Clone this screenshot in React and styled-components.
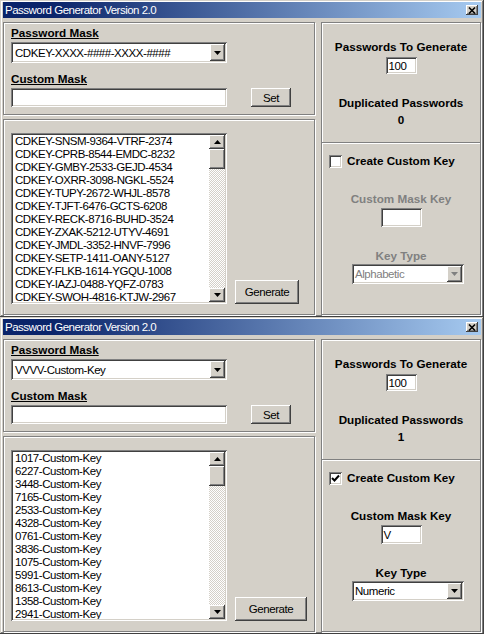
import React from "react";
import styled, { createGlobalStyle, css } from "styled-components";

const GlobalStyle = createGlobalStyle`
  body {
    margin: 0;
    background: #d4d0c8;
    font-family: "Liberation Sans", Arial, sans-serif;
  }
`;

const sunken = css`
  box-shadow: inset 1px 1px #808080, inset -1px -1px #fff,
    inset 2px 2px #404040, inset -2px -2px #d4d0c8;
`;

const raised = css`
  box-shadow: inset -1px -1px #404040, inset 1px 1px #fff,
    inset -2px -2px #808080, inset 2px 2px #d4d0c8;
`;

const smallText = css`
  font-size: 11.5px;
  letter-spacing: -0.45px;
`;

const windows = [
  {
    mask: "CDKEY-XXXX-####-XXXX-####",
    duplicated: 0,
    custom: false,
    maskKey: "",
    keyType: "Alphabetic",
    generateWidth: 64,
    items: [
      "CDKEY-SNSM-9364-VTRF-2374",
      "CDKEY-CPRB-8544-EMDC-8232",
      "CDKEY-GMBY-2533-GEJD-4534",
      "CDKEY-OXRR-3098-NGKL-5524",
      "CDKEY-TUPY-2672-WHJL-8578",
      "CDKEY-TJFT-6476-GCTS-6208",
      "CDKEY-RECK-8716-BUHD-3524",
      "CDKEY-ZXAK-5212-UTYV-4691",
      "CDKEY-JMDL-3352-HNVF-7996",
      "CDKEY-SETP-1411-OANY-5127",
      "CDKEY-FLKB-1614-YGQU-1008",
      "CDKEY-IAZJ-0488-YQFZ-0783",
      "CDKEY-SWOH-4816-KTJW-2967",
    ],
  },
  {
    mask: "VVVV-Custom-Key",
    duplicated: 1,
    custom: true,
    maskKey: "V",
    keyType: "Numeric",
    generateWidth: 72,
    items: [
      "1017", "6227", "3448", "7165", "2533", "4328", "0761",
      "3836", "1075", "5991", "8613", "1358", "2941",
    ].map((n) => n + "-Custom-Key"),
  },
];

const Arrow = ({ up, disabled }) => (
  <svg width="7" height="4" viewBox="0 0 7 4">
    <polygon
      points={up ? "3.5,0 7,4 0,4" : "0,0 7,0 3.5,4"}
      fill={disabled ? "#808080" : "#000"}
    />
  </svg>
);

const Check = () => (
  <svg width="9" height="9" viewBox="0 0 9 9">
    <polyline points="1,4 3.5,6.5 8,1.5" fill="none" stroke="#000" strokeWidth="2" />
  </svg>
);

const CloseIcon = () => (
  <svg width="8" height="7" viewBox="0 0 8 7">
    <path d="M1 0.5 L7 6.5 M7 0.5 L1 6.5" stroke="#000" strokeWidth="1.6" />
  </svg>
);

const GeneratorWindow = ({ data }) => (
  <Window>
    <TitleBar>
      <span>Password Generator Version 2.0</span>
      <CloseButton>
        <CloseIcon />
      </CloseButton>
    </TitleBar>
    <Body>
      <LeftColumn>
        <MaskPanel>
          <Label>Password Mask</Label>
          <Combo>
            <span>{data.mask}</span>
            <ArrowButton>
              <Arrow />
            </ArrowButton>
          </Combo>
          <Label $gap={9}>Custom Mask</Label>
          <Row>
            <TextField $width={216} />
            <Button $width={40} $height={19}>
              Set
            </Button>
          </Row>
        </MaskPanel>
        <ListPanel>
          <ListBox>
            <Items>
              {data.items.map((item) => (
                <Item key={item}>{item}</Item>
              ))}
            </Items>
            <ScrollBar>
              <ScrollButton>
                <Arrow up />
              </ScrollButton>
              <Thumb />
              <Track />
              <ScrollButton>
                <Arrow />
              </ScrollButton>
            </ScrollBar>
          </ListBox>
          <Button $width={data.generateWidth} $height={24}>
            Generate
          </Button>
        </ListPanel>
      </LeftColumn>
      <RightPanel>
        <CountSection>
          <Label $plain>Passwords To Generate</Label>
          <TextField $width={31} $height={17} $gap={3}>
            100
          </TextField>
          <Label $plain $gap={22}>
            Duplicated Passwords
          </Label>
          <Label $plain $gap={3}>
            {data.duplicated}
          </Label>
        </CountSection>
        <CustomSection>
          <CheckRow>
            <CheckBox>{data.custom && <Check />}</CheckBox>
            <Label $plain>Create Custom Key</Label>
          </CheckRow>
          <Centered>
            <Label $plain $disabled={!data.custom} $gap={24}>
              Custom Mask Key
            </Label>
            <TextField $width={41} $gap={2}>
              {data.maskKey}
            </TextField>
            <Label $plain $disabled={!data.custom} $gap={22}>
              Key Type
            </Label>
            <Select $disabled={!data.custom}>
              <span>{data.keyType}</span>
              <ArrowButton>
                <Arrow disabled={!data.custom} />
              </ArrowButton>
            </Select>
          </Centered>
        </CustomSection>
      </RightPanel>
    </Body>
  </Window>
);

const App = () => (
  <>
    <GlobalStyle />
    <Page>
      {windows.map((w, i) => (
        <GeneratorWindow key={i} data={w} />
      ))}
    </Page>
  </>
);

const Page = styled.div`
  display: flex;
  flex-direction: column;
  width: 484px;
`;

const Window = styled.div`
  width: 484px;
  height: 317px;
  box-sizing: border-box;
  padding: 2px 3px;
  background: #d4d0c8;
  box-shadow: inset -1px -1px #404040, inset 1px 1px #d4d0c8,
    inset -2px -2px #808080, inset 2px 2px #fff;
  display: flex;
  flex-direction: column;
`;

const TitleBar = styled.div`
  height: 16px;
  padding: 0 3px 0 2px;
  display: flex;
  align-items: center;
  justify-content: space-between;
  background: linear-gradient(to right, #0a246a 10%, #a6caf0);
  color: #fff;
  font-size: 11.5px;
  letter-spacing: -0.5px;
  margin-bottom: 4px;
`;

const CloseButton = styled.div`
  width: 12px;
  height: 10px;
  background: #d4d0c8;
  ${raised};
  display: flex;
  align-items: center;
  justify-content: center;
`;

const Body = styled.div`
  display: flex;
  gap: 6px;
  height: 293px;
`;

const LeftColumn = styled.div`
  width: 312px;
  display: flex;
  flex-direction: column;
  gap: 4px;
`;

const Panel = styled.div`
  box-sizing: border-box;
  border: 1px solid #808080;
  box-shadow: inset 1px 1px #fff, 1px 1px #fff;
`;

const MaskPanel = styled(Panel)`
  height: 93px;
  padding: 3px 7px 0;
  display: flex;
  flex-direction: column;
`;

const ListPanel = styled(Panel)`
  height: 196px;
  padding: 13px 7px 10px;
  display: flex;
  align-items: flex-end;
  gap: 8px;
`;

const RightPanel = styled(Panel)`
  width: 160px;
  display: flex;
  flex-direction: column;
`;

const Label = styled.div`
  font-size: 11.7px;
  font-weight: bold;
  line-height: 14px;
  height: 14px;
  white-space: nowrap;
  color: ${(p) => (p.$disabled ? "#808080" : "#000")};
  text-decoration: ${(p) => (p.$plain ? "none" : "underline")};
  margin-top: ${(p) => p.$gap || 0}px;
`;

const Combo = styled.div`
  margin-top: 2px;
  width: 216px;
  height: 21px;
  box-sizing: border-box;
  padding: 2px 2px 2px 4px;
  background: #fff;
  ${sunken};
  display: flex;
  align-items: center;
  justify-content: space-between;
  ${smallText};
`;

const Select = styled(Combo)`
  width: 112px;
  height: 20px;
  margin-top: 1px;
  margin-left: 14px;
  padding-left: 3px;
  color: ${(p) => (p.$disabled ? "#808080" : "#000")};
`;

const ArrowButton = styled.div`
  width: 15px;
  height: 100%;
  background: #d4d0c8;
  ${raised};
  display: flex;
  align-items: center;
  justify-content: center;
`;

const Row = styled.div`
  margin-top: 2px;
  display: flex;
  gap: 24px;
`;

const TextField = styled.div`
  width: ${(p) => p.$width}px;
  height: ${(p) => p.$height || 19}px;
  margin-top: ${(p) => p.$gap || 0}px;
  box-sizing: border-box;
  padding: 0 3px;
  background: #fff;
  ${sunken};
  display: flex;
  align-items: center;
  ${smallText};
`;

const Button = styled.div`
  width: ${(p) => p.$width}px;
  height: ${(p) => p.$height}px;
  flex-shrink: 0;
  background: #d4d0c8;
  ${raised};
  display: flex;
  align-items: center;
  justify-content: center;
  ${smallText};
`;

const ListBox = styled.div`
  width: 216px;
  height: 171px;
  flex-shrink: 0;
  box-sizing: border-box;
  padding: 2px;
  background: #fff;
  ${sunken};
  display: flex;
`;

const Items = styled.div`
  flex: 1;
  overflow: hidden;
  padding-left: 2px;
`;

const Item = styled.div`
  ${smallText};
  line-height: 13px;
  white-space: nowrap;
`;

const ScrollBar = styled.div`
  width: 16px;
  display: flex;
  flex-direction: column;
`;

const ScrollButton = styled.div`
  height: 14px;
  background: #d4d0c8;
  ${raised};
  display: flex;
  align-items: center;
  justify-content: center;
`;

const Thumb = styled.div`
  height: 20px;
  background: #d4d0c8;
  ${raised};
`;

const Track = styled.div`
  flex: 1;
  background: repeating-conic-gradient(#d4d0c8 0% 25%, #fff 0% 50%) 0 0 / 2px 2px;
`;

const CountSection = styled.div`
  height: 120px;
  box-sizing: border-box;
  padding-top: 17px;
  display: flex;
  flex-direction: column;
  align-items: center;
  border-bottom: 1px solid #808080;
  box-shadow: 0 1px #fff;
`;

const CustomSection = styled.div`
  margin-top: 1px;
  padding: 10px 0 0 7px;
  display: flex;
  flex-direction: column;
`;

const CheckRow = styled.div`
  display: flex;
  align-items: center;
  gap: 5px;
`;

const CheckBox = styled.div`
  width: 13px;
  height: 13px;
  box-sizing: border-box;
  background: #fff;
  ${sunken};
  display: flex;
  align-items: center;
  justify-content: center;
`;

const Centered = styled.div`
  display: flex;
  flex-direction: column;
  align-items: center;
  margin-left: -7px;
`;

export default App;
